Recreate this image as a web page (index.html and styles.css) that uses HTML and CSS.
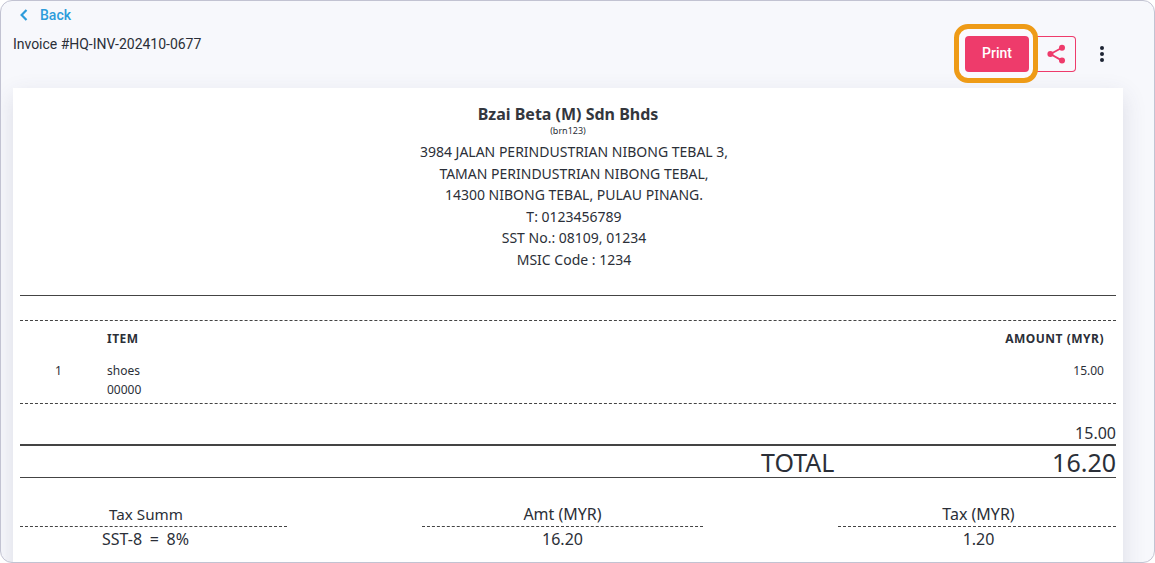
FILE: index.html
```html
<!DOCTYPE html>
<html lang="en">
<head>
<meta charset="utf-8">
<title>Invoice</title>
<link rel="stylesheet" href="styles.css">
</head>
<body>
<div class="frame">
  <a class="back">
    <svg class="back-icon" width="10" height="14" viewBox="0 0 10 14"><path d="M7.5 2 2.6 7l4.9 5" fill="none" stroke="#2d9cdb" stroke-width="2.2"/></svg>
    <span>Back</span>
  </a>
  <div class="head">
    <div class="title">Invoice #HQ-INV-202410-0677</div>
    <div class="actions">
      <div class="print-wrap">
        <span class="ring"></span>
        <button class="print">Print</button>
      </div>
      <button class="share">
        <svg width="22" height="24" viewBox="0 0 22 24"><path d="M17 5.7 5.5 12 17 18.6" fill="none" stroke="#ee3b6b" stroke-width="1.8"/><circle cx="17" cy="5.7" r="3" fill="#ee3b6b"/><circle cx="5.4" cy="12" r="3" fill="#ee3b6b"/><circle cx="17" cy="18.6" r="3" fill="#ee3b6b"/></svg>
      </button>
      <div class="kebab"><i></i><i></i><i></i></div>
    </div>
  </div>
  <div class="paper">
    <div class="company">
      <div class="name">Bzai Beta (M) Sdn Bhds</div>
      <div class="brn">(brn123)</div>
      <div class="addr">3984 JALAN PERINDUSTRIAN NIBONG TEBAL 3,</div>
      <div class="addr">TAMAN PERINDUSTRIAN NIBONG TEBAL,</div>
      <div class="addr">14300 NIBONG TEBAL, PULAU PINANG.</div>
      <div class="addr">T: 0123456789</div>
      <div class="addr">SST No.: 08109, 01234</div>
      <div class="addr">MSIC Code : 1234</div>
    </div>
    <hr class="solid">
    <div class="items">
      <div class="row th"><span class="c-no"></span><span class="c-item">ITEM</span><span class="c-amt">AMOUNT (MYR)</span></div>
      <div class="row td"><span class="c-no">1</span><span class="c-item">shoes<br>00000</span><span class="c-amt">15.00</span></div>
    </div>
    <div class="subtotal">15.00</div>
    <div class="total"><span class="total-label">TOTAL</span><span class="total-val">16.20</span></div>
    <div class="tax">
      <div class="tax-col t1"><div class="tax-h t1-h">Tax Summ</div><div class="tax-v t1-v">SST-8 = 8%</div></div>
      <div class="tax-col t2"><div class="tax-h">Amt (MYR)</div><div class="tax-v">16.20</div></div>
      <div class="tax-col t3"><div class="tax-h">Tax (MYR)</div><div class="tax-v">1.20</div></div>
    </div>
  </div>
</div>
</body>
</html>
```
FILE: styles.css
```css
* { box-sizing: border-box; }
html, body { margin: 0; padding: 0; height: 100%; overflow: hidden; background: #fff; }
.frame {
  width: 1155px; height: 563px; overflow: hidden;
  border: 1px solid #c2c3d2; border-radius: 12px;
  background: #f7f8fc; padding: 0 31px 0 12px;
  font-family: Roboto, sans-serif;
}
.back { display: flex; align-items: center; gap: 11px; height: 28px; padding-left: 6px; color: #2d9cdb; font-size: 14px; font-weight: 500; }
.back-icon { display: block; }
.head { display: flex; justify-content: space-between; height: 59px; }
.title { font-size: 14px; color: #2b2f38; line-height: 30px; letter-spacing: -0.02px; }
.actions { display: flex; align-items: flex-start; padding: 7px 11px 0 0; }
.print-wrap { position: relative; }
.ring { position: absolute; left: -11px; top: -12px; width: 84px; height: 59px; border: 5px solid #ee9b17; border-radius: 14px; background: #fafaff; }
.print { position: relative; display: block; width: 64px; height: 36px; padding: 0 0 2px; border: 0; border-radius: 4px; background: #ee3b6b; color: #fff; font: 500 14px Roboto, sans-serif; }
.share { display: flex; align-items: center; justify-content: center; width: 39px; height: 36px; margin-left: 8px; padding: 0; background: transparent; border: 1px solid #ee3b6b; border-left: 0; border-radius: 0 4px 4px 0; }
.kebab { display: flex; flex-direction: column; gap: 2px; align-items: center; width: 20px; margin-left: 16px; padding-top: 10px; }
.kebab i { display: block; width: 4px; height: 4px; border-radius: 50%; background: #1d2433; }
.paper {
  width: 1110px; height: 600px; background: #fff; padding: 0 7px;
  box-shadow: 0 8px 22px rgba(60, 60, 100, .15);
  font-family: "Noto Sans", sans-serif; color: #2b2f38;
}
.company { height: 207px; padding-top: 16px; text-align: center; }
.name { font-size: 16px; font-weight: 700; line-height: 20px; color: #33363d; }
.brn { font-size: 9px; line-height: 10px; margin-top: 2px; margin-bottom: 5px; }
.addr { font-size: 14px; line-height: 21.6px; padding-left: 12px; }
.solid { margin: 0; border: 0; border-top: 1px solid #444; }
.items { margin-top: 24px; border-top: 1px dashed #444; border-bottom: 1px dashed #444; height: 84px; font-size: 12px; }
.row { display: flex; }
.th { height: 34px; align-items: center; font-weight: 700; letter-spacing: .5px; }
.td { line-height: 19px; padding-top: 6px; }
.c-no { width: 87px; padding-left: 35px; }
.c-item { flex: 1; }
.c-amt { padding-right: 12px; text-align: right; }
.subtotal { height: 42px; border-bottom: 2px solid #444; font-size: 16px; line-height: 20px; padding-top: 19px; text-align: right; }
.total { display: flex; justify-content: space-between; height: 32px; border-bottom: 1px solid #444; font-size: 25px; line-height: 32px; }
.total-label { margin-left: 741px; }
.tax { display: flex; justify-content: space-between; padding-top: 26px; font-size: 16px; text-align: center; }
.tax-h { border-bottom: 1px dashed #444; line-height: 20px; height: 23px; }
.tax-v { line-height: 25px; }
.t1 { width: 267px; }
.t1-h { padding-right: 15px; font-size: 15.2px; }
.t1-v { padding-right: 16px; word-spacing: 3.5px; }
.t2 { width: 281px; margin-left: 135px; }
.t3 { width: 278px; margin-left: 135px; }
.t3 .tax-h, .t3 .tax-v { padding-left: 3px; }
```
